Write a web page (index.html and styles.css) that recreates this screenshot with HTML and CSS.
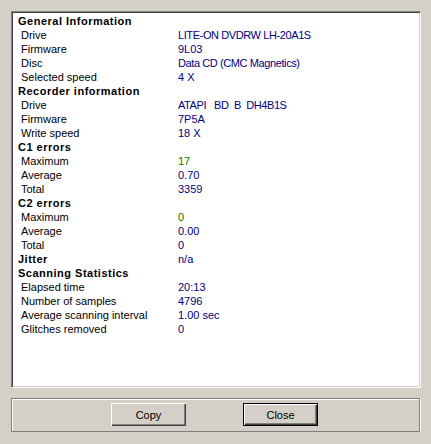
FILE: index.html
```html
<!DOCTYPE html>
<html>
<head>
<meta charset="utf-8">
<link rel="stylesheet" href="styles.css">
</head>
<body>
<div class="dialog">
  <div class="list">
    <div class="row head"><span class="k">General Information</span><span class="v"></span></div>
    <div class="row"><span class="k">Drive</span><span class="v caps">LITE-ON DVDRW LH-20A1S</span></div>
    <div class="row"><span class="k">Firmware</span><span class="v">9L03</span></div>
    <div class="row"><span class="k">Disc</span><span class="v caps">Data CD (CMC Magnetics)</span></div>
    <div class="row"><span class="k">Selected speed</span><span class="v">4 X</span></div>
    <div class="row head"><span class="k">Recorder information</span><span class="v"></span></div>
    <div class="row"><span class="k">Drive</span><span class="v caps pre">ATAPI   BD  B  DH4B1S</span></div>
    <div class="row"><span class="k">Firmware</span><span class="v">7P5A</span></div>
    <div class="row"><span class="k">Write speed</span><span class="v">18 X</span></div>
    <div class="row head"><span class="k">C1 errors</span><span class="v"></span></div>
    <div class="row"><span class="k">Maximum</span><span class="v green">17</span></div>
    <div class="row"><span class="k">Average</span><span class="v">0.70</span></div>
    <div class="row"><span class="k">Total</span><span class="v">3359</span></div>
    <div class="row head"><span class="k">C2 errors</span><span class="v"></span></div>
    <div class="row"><span class="k">Maximum</span><span class="v green">0</span></div>
    <div class="row"><span class="k">Average</span><span class="v">0.00</span></div>
    <div class="row"><span class="k">Total</span><span class="v">0</span></div>
    <div class="row head"><span class="k">Jitter</span><span class="v">n/a</span></div>
    <div class="row head"><span class="k">Scanning Statistics</span><span class="v"></span></div>
    <div class="row"><span class="k">Elapsed time</span><span class="v">20:13</span></div>
    <div class="row"><span class="k">Number of samples</span><span class="v">4796</span></div>
    <div class="row"><span class="k">Average scanning interval</span><span class="v">1.00 sec</span></div>
    <div class="row"><span class="k">Glitches removed</span><span class="v">0</span></div>
  </div>
  <div class="group">
    <button class="btn">Copy</button>
    <button class="btn default">Close</button>
  </div>
</div>
</body>
</html>
```

FILE: styles.css
```css
html, body {
  margin: 0;
  padding: 0;
  background: #d4d0c8;
}
body {
  font-family: "Liberation Sans", Arial, sans-serif;
  font-size: 11px;
  color: #000;
}
.dialog {
  padding: 11px 0 0 11px;
  display: flex;
  flex-direction: column;
  width: 410px;
}
.list {
  box-sizing: border-box;
  width: 410px;
  height: 377px;
  background: #fff;
  border-top: 1px solid #808080;
  border-left: 1px solid #808080;
  border-right: 1px solid #fff;
  border-bottom: 1px solid #fff;
  box-shadow: inset 1px 1px 0 #404040, inset -1px -1px 0 #d4d0c8;
  padding: 2px 2px 0 2px;
}
.row {
  display: flex;
  height: 14px;
  line-height: 14px;
  white-space: nowrap;
}
.k {
  width: 157px;
  padding-left: 7px;
  flex: none;
}
.head .k {
  font-weight: bold;
  padding-left: 4px;
  width: 160px;
  letter-spacing: 0.5px;
}
.head .v {
  font-weight: normal;
}
.v {
  color: #000080;
}
.v.caps {
  letter-spacing: -0.4px;
}
.v.green {
  color: #008000;
}
.pre {
  white-space: pre;
}
.group {
  box-sizing: border-box;
  margin-top: 10px;
  width: 409px;
  height: 34px;
  border: 1px solid #808080;
  box-shadow: inset 1px 1px 0 #fff, 1px 1px 0 #fff;
  display: flex;
  justify-content: center;
  align-items: flex-start;
  gap: 57px;
  padding-top: 4px;
  padding-right: 2px;
}
.btn {
  box-sizing: border-box;
  width: 75px;
  height: 23px;
  margin: 0;
  padding: 0;
  font-family: "Liberation Sans", Arial, sans-serif;
  font-size: 11px;
  color: #000;
  background: #d4d0c8;
  border: none;
  box-shadow: inset 1px 1px 0 #fff, inset -1px -1px 0 #404040, inset -2px -2px 0 #808080;
}
.btn.default {
  border: 1px solid #000;
  box-shadow: inset 1px 1px 0 #fff, inset -1px -1px 0 #404040, inset -2px -2px 0 #808080;
}
```
